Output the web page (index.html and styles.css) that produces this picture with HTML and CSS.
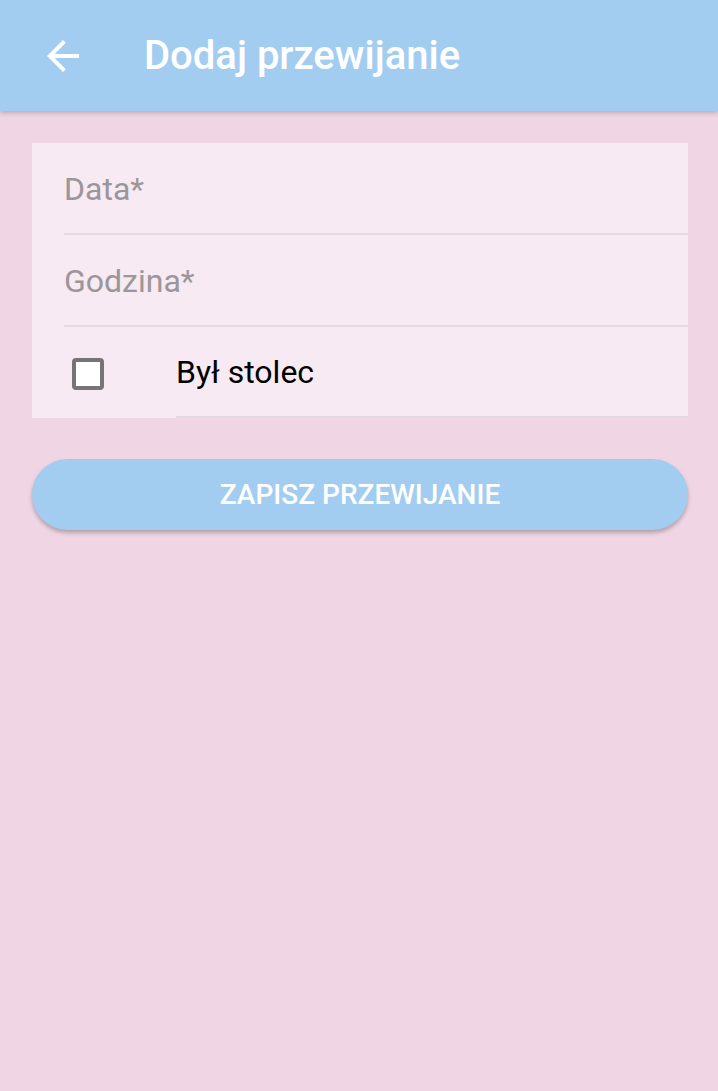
FILE: index.html
```html
<!DOCTYPE html>
<html lang="pl">
<head>
<meta charset="utf-8">
<title>Dodaj przewijanie</title>
<link rel="stylesheet" href="styles.css">
</head>
<body>
<header class="appbar">
  <button class="back" aria-label="Wstecz">
    <svg viewBox="0 0 24 24" width="48" height="48"><path d="M20 11H7.83l5.59-5.59L12 4l-8 8 8 8 1.41-1.41L7.83 13H20v-2z" fill="#fff"/></svg>
  </button>
  <h1 class="title">Dodaj przewijanie</h1>
</header>
<main class="content">
  <form class="card">
    <div class="field"><span class="label">Data*</span></div>
    <div class="field"><span class="label">Godzina*</span></div>
    <div class="check-row">
      <span class="checkbox"></span>
      <span class="check-label">Był stolec</span>
    </div>
  </form>
  <button class="save" type="button">ZAPISZ PRZEWIJANIE</button>
</main>
</body>
</html>
```

FILE: styles.css
```css
html, body {
  margin: 0;
  padding: 0;
}
body {
  background: #f0d6e4;
  font-family: Roboto, "Liberation Sans", sans-serif;
  min-height: 1091px;
}
.appbar {
  height: 111px;
  background: #a3cdf0;
  display: flex;
  align-items: center;
  box-shadow: 0 2px 5px rgba(0, 0, 0, 0.22);
  position: relative;
  z-index: 1;
}
.back {
  width: 48px;
  height: 48px;
  margin-left: 39px;
  padding: 0;
  border: 0;
  background: none;
  display: flex;
}
.title {
  margin: 0 0 0 57px;
  font-size: 40px;
  font-weight: 500;
  color: #fff;
  letter-spacing: 0;
}
.content {
  padding: 32px 30px 0 32px;
  display: flex;
  flex-direction: column;
}
.card {
  margin: 0;
  background: #f7eaf2;
  display: flex;
  flex-direction: column;
}
.field {
  height: 90px;
  margin-left: 32px;
  border-bottom: 2px solid #e0dadf;
  display: flex;
  align-items: center;
}
.label {
  font-size: 32px;
  color: #9b9699;
  margin-top: 2px;
}
.check-row {
  height: 91px;
  display: flex;
  align-items: center;
}
.checkbox {
  box-sizing: border-box;
  width: 32px;
  height: 32px;
  margin-left: 40px;
  border: 4px solid #757575;
  border-radius: 4px;
  background: #fff;
  margin-top: 3px;
}
.check-label {
  flex: 1;
  align-self: stretch;
  margin-left: 72px;
  display: flex;
  align-items: center;
  font-size: 32px;
  color: #000;
  border-bottom: 2px solid #e0dadf;
}
.save {
  margin-top: 41px;
  height: 71px;
  border: 0;
  border-radius: 36px;
  background: #a3cdf0;
  color: #fff;
  font-family: Roboto, "Liberation Sans", sans-serif;
  font-size: 28px;
  font-weight: 500;
  letter-spacing: 0;
  box-shadow: 0 3px 4px rgba(0, 0, 0, 0.25);
}
```
